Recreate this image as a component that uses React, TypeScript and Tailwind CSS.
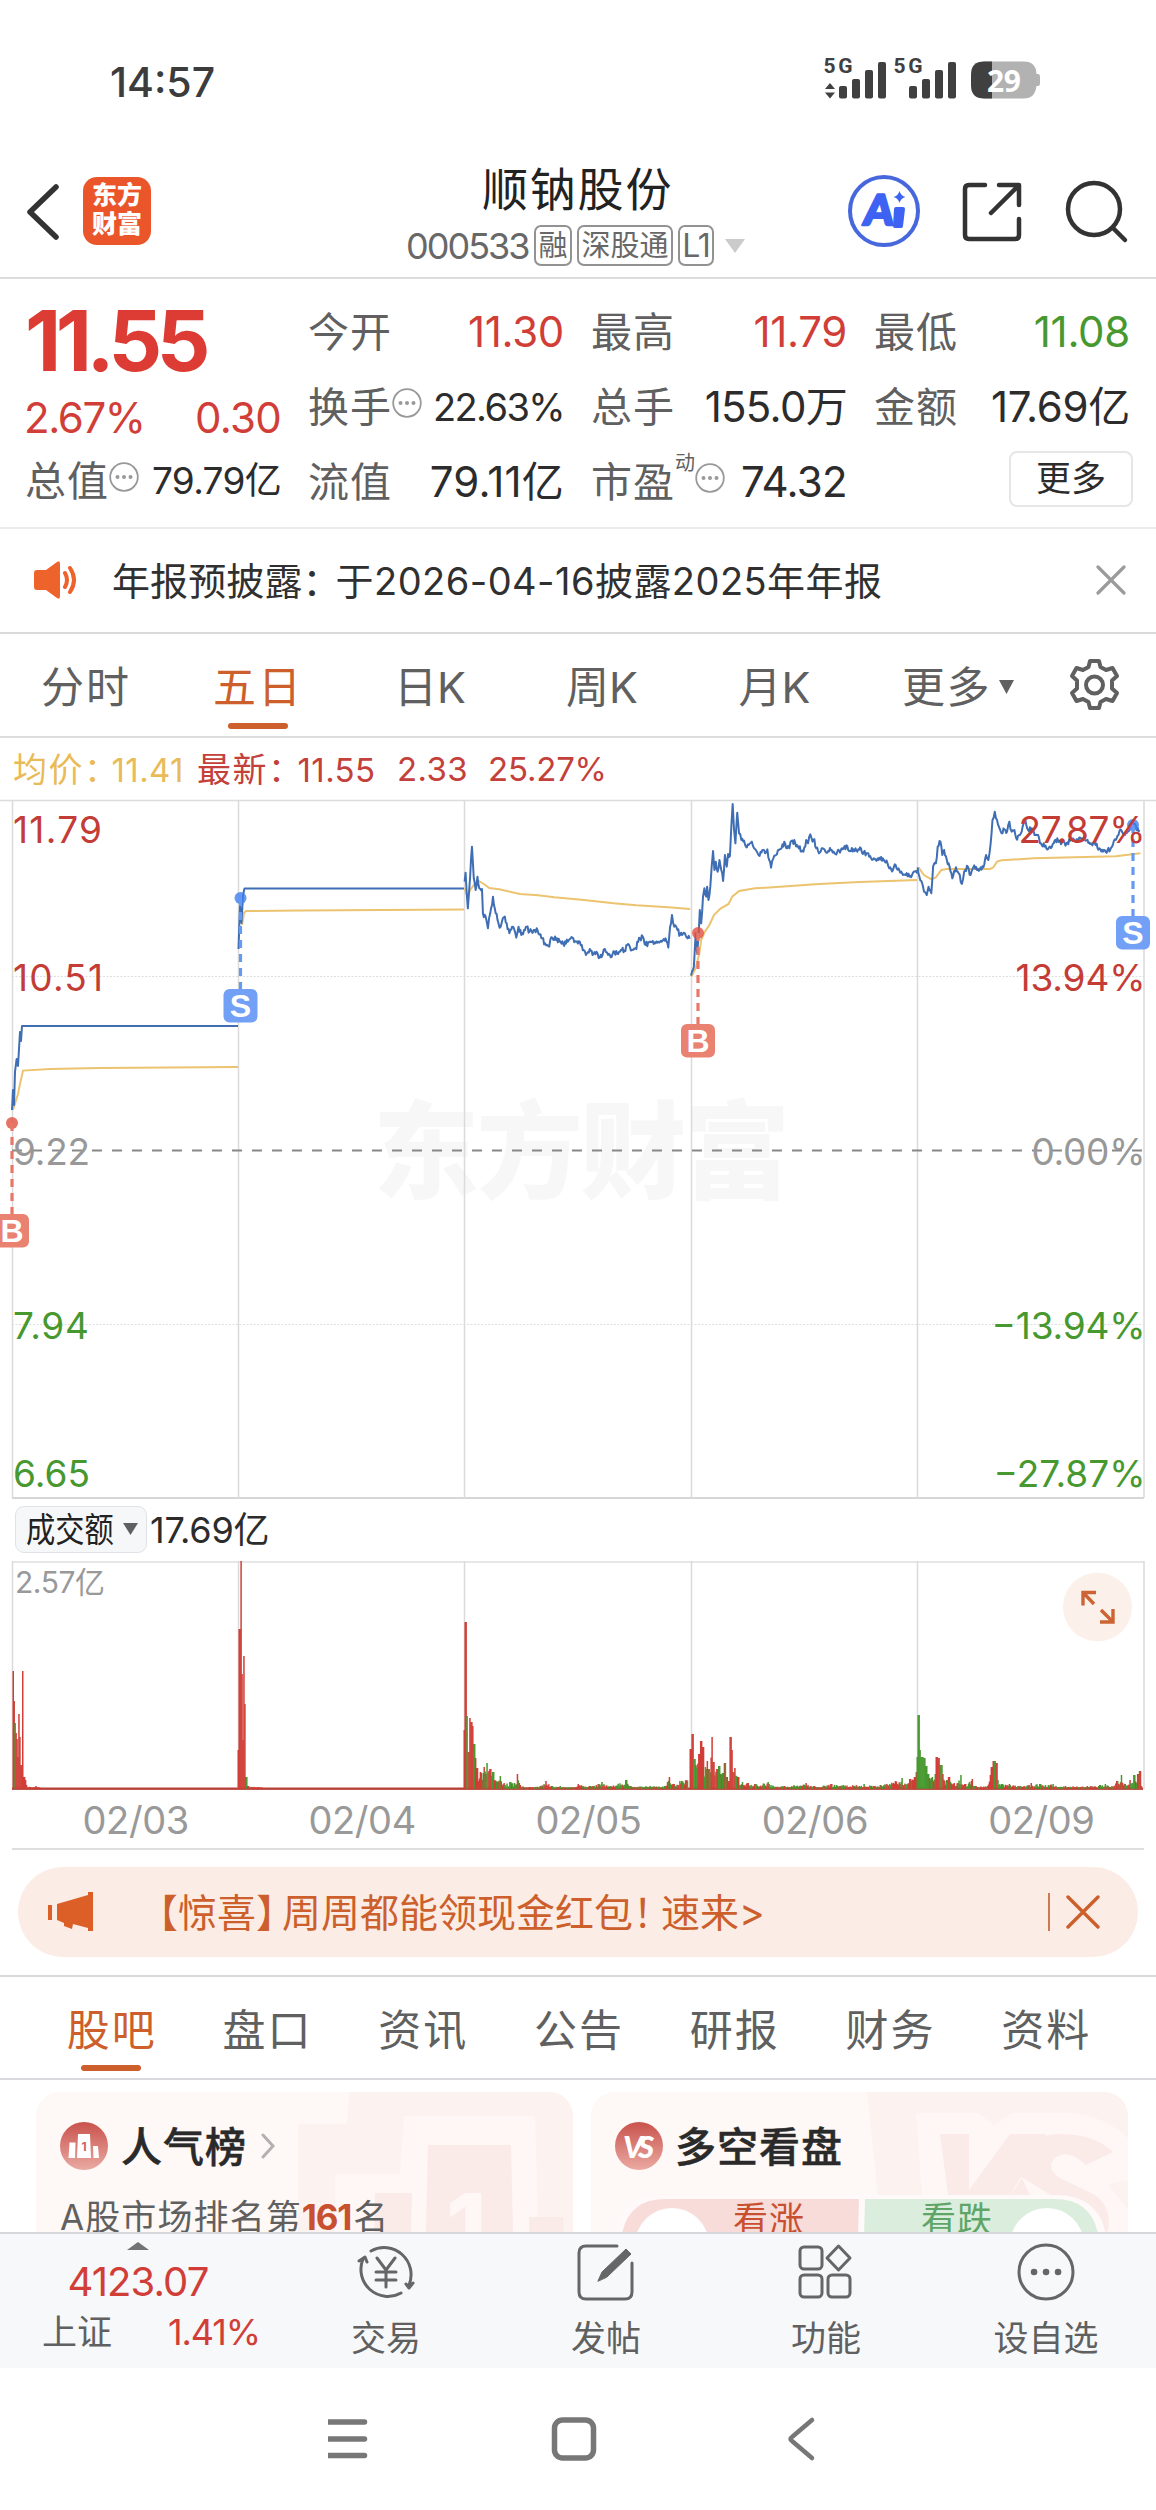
import React from 'react';

interface StatProps {
  label: string;
  value: string;
  color?: string;
  size?: string;
  info?: boolean;
  sup?: string;
}

interface MarkerProps {
  x: number;
  y: number;
  boxY: number;
  type: 'B' | 'S';
}

type Point = [number, number];

const RED = '#d03e37';
const GREEN = '#46982f';

// Small deterministic noise so every render draws the same minute ticks
const noise = (n: number) => {
  const v = Math.sin(n * 127.1 + 11.7) * 43758.5453;
  return v - Math.floor(v);
};

const parse = (s: string): Point[] =>
  s.split(' ').map((p) => p.split(',').map(Number) as Point);

// Intraday series, stored relative to the chart origin in sub-pixel units
const priceDays = [
  '54,305 56,278 61,385 66,290 70,200 74,295 78,330 82,290 86,325 92,327 94,400 100,410 105,445 110,400 116,350 122,400 128,430 133,440 140,412 146,430 152,460 158,440 163,450 167,473 172,440 178,465 184,450 190,440 196,455 205,450 214,452 222,475 230,490 237,498 246,473 254,480 262,485 270,493 280,485 290,473 298,485 306,485 315,510 322,520 328,507 336,522 345,520 350,533 356,525 361,507 368,525 374,532 382,515 390,522 396,510 404,512 412,492 420,510 428,505 438,475 444,470 450,495 458,487 468,492 478,485 486,485 494,475 500,503 504,440 508,405 513,440 520,450 526,465 534,458 540,472 547,476',
  '550,587 556,560 560,460 563,520 567,450 569,390 572,430 576,350 579,325 583,350 585,320 588,360 592,320 595,260 598,213 601,270 604,245 608,275 612,240 616,270 620,303 624,225 628,260 631,222 635,228 638,140 641,72 644,150 647,190 651,98 655,160 660,180 666,182 670,200 676,195 683,185 688,205 694,215 700,228 706,210 712,220 717,208 721,240 725,263 730,235 736,225 742,210 748,205 754,185 760,205 765,205 770,182 778,190 786,205 796,215 802,180 806,190 811,163 816,185 820,178 824,205 830,220 836,205 842,208 850,213 858,210 866,222 874,212 882,208 892,198 898,213 906,208 914,215 920,202 926,222 934,220 942,228 950,235 960,240 970,235 980,250 986,262 992,270 998,255 1004,265 1012,280 1020,285 1028,290 1036,278 1045,280',
  '1046,262 1050,290 1056,310 1060,335 1066,345 1070,320 1076,340 1080,260 1086,250 1090,200 1096,185 1100,225 1104,210 1110,240 1116,260 1122,295 1130,262 1136,280 1143,312 1148,275 1156,260 1162,285 1168,262 1176,270 1184,262 1190,262 1196,225 1201,240 1206,190 1210,120 1215,95 1220,120 1224,140 1230,160 1236,148 1242,155 1247,125 1252,155 1258,150 1262,175 1270,165 1276,140 1282,120 1288,150 1296,145 1302,165 1308,165 1316,190 1324,200 1334,202 1344,190 1352,175 1362,188 1372,190 1382,178 1394,178 1404,175 1414,182 1424,192 1436,195 1444,205 1452,215 1462,210 1472,200 1480,180 1486,165 1492,150 1500,165 1510,150 1518,125 1526,150 1532,150',
];

const averageDays = [
  '54,325 60,350 66,330 78,308 86,304 96,312 108,324 130,328 175,342 215,346 250,352 310,359 380,370 430,376 500,382 548,387',
  '550,590 560,565 568,520 572,480 580,455 590,435 600,405 615,385 632,372 640,350 655,333 690,325 760,319 830,312 920,306 1045,300',
  '1048,262 1060,285 1076,298 1086,292 1098,270 1110,267 1205,267 1212,262 1220,245 1230,241 1300,235 1480,229 1534,220',
];

const volumeDays = [
  '13,118 14,88 15,66 16,56 17,50 18,32 19,75 20,52 21,24 22.3,118 24,12 25,9 26,4 30,2 36,3 40,1',
  '238,39 239.4,160 240.4,228 241.4,115 242.4,49 243.8,133 245,85 246,12 248,3 258,2 262,1',
  '464,59 465.5,167 467,73 468.5,37 469.5,71 471,67 472.5,63 474,45 475,31 477,21 480,17 484,22 487,26 490,20 493,17 497,7 500,13 504,6 510,7 514,6 517,15 520,4 530,2 540,3 546,8 552,3 560,3 575,2 578,5 590,3 602,7 610,3 626,9 630,3 650,3 665,3 669,12 674,5 680,8 688,14',
  '690,40 692,55 694,30 696,24 699,35 701,48 703,42 706,20 707,28 709,20 712,52 713.6,27 716.6,20 719,23 722,16 724.7,26 727,12 729,8 730.6,52 732,39 733.5,17 735,21 738,12 742,7 747.5,6 755,5 768,7 771,4 784,3 806,6 814,3 831,5 843,4 864,5 880,4 895,8 902,11 906,5 910,10 914,12 916.4,17',
  '917,32 918.3,74 919.7,39 921.5,32 924,31 926,23 928,15 932,12 935,15 936,32 938.5,31 940.7,24 943,15 946.6,9 949,12 954,6 961,14 965,5 972,10 976,3 987,3 990,14 991.6,22 993,28 994.5,28 996,26 998,9 1002,5 1009,5 1020,3 1031,6 1040,5 1053,5 1065,3 1087,3 1100,4 1105,5 1112,3 1117,8 1121,14 1125,5 1130,9 1134,14 1137.5,15 1140,18 1141.5,3',
];

const gridX = [12.5, 238.5, 464.5, 691.5, 917.5, 1144];
const dates = ['02/03', '02/04', '02/05', '02/06', '02/09'];

const withTicks = (pts: Point[]) => {
  const out: string[] = [];
  for (let i = 0; i < pts.length - 1; i++) {
    const [x0, y0] = pts[i];
    const [x1, y1] = pts[i + 1];
    const steps = Math.max(1, Math.round((x1 - x0) / 2.2));
    for (let s = 0; s < steps; s++) {
      const t = s / steps;
      const jitter = s === 0 ? 0 : (noise(x0 + s) - 0.5) * 17;
      out.push(`${x0 + (x1 - x0) * t},${(y0 + (y1 - y0) * t + jitter).toFixed(1)}`);
    }
  }
  out.push(pts[pts.length - 1].join(','));
  return out.join(' ');
};

const heightAt = (pts: Point[], x: number) => {
  for (let i = 0; i < pts.length - 1; i++) {
    if (x >= pts[i][0] && x <= pts[i + 1][0]) {
      const near = x - pts[i][0] < pts[i + 1][0] - x ? pts[i] : pts[i + 1];
      const gap = pts[i + 1][0] - pts[i][0];
      if (gap < 3 || Math.abs(near[0] - x) < 0.6) return near[1];
      const t = (x - pts[i][0]) / gap;
      return (pts[i][1] + (pts[i + 1][1] - pts[i][1]) * t) * (0.35 + noise(x) * 0.55);
    }
  }
  return 0;
};

const buildBars = (pts: Point[], day: number) => {
  const bars: { x: number; h: number; color: string }[] = [];
  const end = pts[pts.length - 1][0];
  for (let x = pts[0][0]; x <= end; x += 0.95) {
    const h = Math.max(1.5, heightAt(pts, x));
    let green = noise(x * 3.3) > (day < 2 ? 0.82 : 0.5);
    if (h > 30) {
      const px = Math.floor(x);
      green = (day === 4 && x < 926) || (day === 2 && [466, 467, 473, 474].includes(px)) || (day === 0 && px === 14);
    }
    bars.push({ x, h, color: green ? GREEN : RED });
  }
  return bars;
};

const InfoDot = () => (
  <svg className="w-[30px] h-[30px] shrink-0" viewBox="0 0 30 30" fill="none">
    <circle cx="15" cy="15" r="13.8" stroke="#999" strokeWidth="1.8" />
    <g fill="#999">
      <circle cx="8.5" cy="15" r="2" />
      <circle cx="15" cy="15" r="2" />
      <circle cx="21.5" cy="15" r="2" />
    </g>
  </svg>
);

const Stat: React.FC<StatProps> = ({ label, value, color = 'text-[#2c2c2c]', size = 'text-[42px] tracking-[-0.3px]', info, sup }) => (
  <div className="flex items-center h-[56px] leading-[56px]">
    <span className="text-[41px] tracking-[1px] text-[#606060]">{label}</span>
    {sup && <span className="text-[20px] text-[#606060] self-start leading-[22px] -mt-[2px]">{sup}</span>}
    {info && <span className="-mt-[7px]"><InfoDot /></span>}
    <span className={`ml-auto whitespace-nowrap ${size} ${color}`}>{value}</span>
  </div>
);

const Marker: React.FC<MarkerProps> = ({ x, y, boxY, type }) => {
  const buy = type === 'B';
  return (
    <g>
      <circle cx={x} cy={y} r="6" fill={buy ? '#e0503f' : '#3f7ff0'} fillOpacity="0.8" />
      <line x1={x} x2={x} y1={y} y2={boxY} stroke={buy ? '#e87767' : '#6699f2'} strokeWidth="3.2" strokeDasharray="8 6" />
      <rect x={x - 17} y={boxY} width="34" height="33.5" rx="6" fill={buy ? '#ea8272' : '#72a0f6'} />
      <text x={x} y={boxY + 28} textAnchor="middle" fontSize="32" fontWeight="600" fill="#fff" fontFamily="Liberation Sans, sans-serif">
        {type}
      </text>
    </g>
  );
};

const StatusBar = () => (
  <div className="h-[156px] flex justify-between pt-[52px] pl-[110px] pr-[115px]">
    <span className="text-[41px] font-medium leading-[60px] text-[#3c3c3c]">14:57</span>
    <svg className="w-[220px] h-[50px] mt-[1px]" viewBox="822 54 220 50" fill="#404040">
      <g fontSize="21" fontWeight="700" fontFamily="Roboto, sans-serif">
        <text x="824.500" y="74" textLength="29">5G</text>
        <text x="894.500" y="74" textLength="29">5G</text>
      </g>
      <path d="M831 84l5 6h-10zM831 99.500l5-6h-10z" />
      {[840, 910].map((x) => (
        <g key={x}>
          <rect x={x} y="87" width="8" height="12.500" rx="2" />
          <rect x={x + 13} y="80" width="8" height="19.500" rx="2" />
          <rect x={x + 26} y="71" width="8" height="28.500" rx="2" />
          <rect x={x + 39} y="63" width="8" height="36.500" rx="2" />
        </g>
      ))}
      <path d="M984 62.500h41q12 0 12.500 12.500h1.500q2 0 2 3v6q0 3-2 3h-1.500q-1.500 12.500-12.500 12.500h-41z" fill="#b2b2b2" />
      <path d="M993 62.500h-8q-13 0-13 13v11q0 13 13 13h8z" />
      <text x="988" y="92.500" textLength="34" fontSize="30" fontWeight="700" fontFamily="Noto Sans, sans-serif" fill="#fff">29</text>
    </svg>
  </div>
);

const Header = () => (
  <div className="h-[123px] flex items-start border-b-2 border-[#dcdcdc] text-[#333]">
    <svg className="w-[34px] h-[60px] ml-[26px] mt-[26px]" viewBox="0 0 34 60" fill="none" stroke="#333" strokeWidth="5.500" strokeLinecap="round" strokeLinejoin="round">
      <path d="M30 5L4 30l26 25" />
    </svg>
    <div className="w-[68px] h-[68px] ml-[23px] mt-[21px] rounded-[14px] bg-[#ea552a] text-white font-black text-[25px] leading-[29px] pt-[4px] text-center">
      东方<br />财富
    </div>
    <div className="ml-[255px] w-[340px] flex flex-col">
      <div className="text-[46px] leading-[56px] mt-[5px] ml-[76px] tracking-[1.8px] text-[#222] whitespace-nowrap">顺钠股份</div>
      <div className="flex items-center h-[42px] mt-[8px] text-[#686868]">
        <span className="text-[36px] tracking-[-2px] w-[128px] shrink-0">000533</span>
        <span className="h-[41px] w-[38px] rounded-[7px] border-2 border-[#929292] text-[29px] leading-[37px] text-center shrink-0">融</span>
        <span className="h-[41px] w-[96px] rounded-[7px] border-2 border-[#929292] text-[29px] leading-[37px] text-center ml-[5px] whitespace-nowrap shrink-0">深股通</span>
        <span className="h-[41px] w-[36px] rounded-[7px] border-2 border-[#929292] text-[32px] leading-[37px] text-center ml-[5px] tracking-[-1px] shrink-0">L1</span>
        <svg className="w-[22px] h-[14px] ml-[10px] shrink-0" viewBox="0 0 22 14"><path d="M1 0h20L11 14z" fill="#cbcbcb" /></svg>
      </div>
    </div>
    <svg className="w-[74px] h-[74px] ml-[101px] mt-[18px]" viewBox="0 0 74 74">
      <circle cx="37" cy="37" r="34" fill="none" stroke="#4767dd" strokeWidth="4" />
      <text x="16" y="51" fontSize="42" fontWeight="900" fontFamily="Lato, sans-serif" fill="#3e63f2" stroke="#3e63f2" strokeWidth="2.500" strokeLinejoin="round" transform="translate(5 0) skewX(-6)">A</text>
      <path d="M49 33h7q2 0 2 2l-2 17q0 2-2 2h-6q-2 0-2-2l1-17q0-2 2-2zM52.500 17q1.500 5 6 6-4.500 1-6 6-1.500-5-6-6 4.500-1 6-6z" fill="#3e63f2" />
    </svg>
    <svg className="w-[60px] h-[60px] ml-[41px] mt-[26px]" viewBox="0 0 60 60" fill="none" stroke="#333" strokeWidth="4.500" strokeLinecap="round" strokeLinejoin="round">
      <path d="M23 3H7Q3 3 3 7v46q0 4 4 4h46q4 0 4-4V37M37 3h20v20M56 4L29 31" />
    </svg>
    <svg className="w-[64px] h-[64px] ml-[43px] mt-[24px]" viewBox="0 0 64 64" fill="none" stroke="#333" strokeWidth="4.500" strokeLinecap="round">
      <circle cx="29" cy="29" r="26" />
      <path d="M48 48l12 12" />
    </svg>
  </div>
);

const Quote = () => (
  <div className="h-[250px] border-b-2 border-[#ececec] flex pl-[25px] pt-[25px]">
    <div className="w-[256px]">
      <div className="h-[74px] text-[84px] leading-[74px] font-bold tracking-[-5.5px] text-[#dc3c34]">11.55</div>
      <div className="flex justify-between h-[56px] mt-[12px] items-center text-[42px] tracking-[-1.4px] text-[#d03e37] leading-[56px]">
        <span className="-ml-[1px]">2.67%</span>
        <span className="tracking-[-0.7px]">0.30</span>
      </div>
      <div className="mt-[7px]"><Stat label="总值" value="79.79亿" info size="text-[37px] tracking-[-0.7px]" /></div>
    </div>
    <div className="w-[256px] ml-[27px] flex flex-col gap-[19px]">
      <Stat label="今开" value="11.30" color="text-[#d03e37]" />
      <Stat label="换手" value="22.63%" info size="text-[38px] tracking-[-1.6px]" />
      <Stat label="流值" value="79.11亿" size="text-[42px] tracking-[0.2px]" />
    </div>
    <div className="w-[256px] ml-[27px] flex flex-col gap-[19px]">
      <Stat label="最高" value="11.79" color="text-[#d03e37]" />
      <Stat label="总手" value="155.0万" size="text-[42px] tracking-[-0.7px]" />
      <Stat label="市盈" value="74.32" sup="动" info size="text-[42px] tracking-[-0.7px]" />
    </div>
    <div className="w-[256px] ml-[27px] flex flex-col gap-[19px]">
      <Stat label="最低" value="11.08" color="text-[#46982f]" />
      <Stat label="金额" value="17.69亿" />
      <button className="self-end -mr-[3px] mt-[-3px] w-[124px] h-[56px] border-2 border-[#e6e6e6] rounded-[8px] text-[35px] leading-[51px] text-[#2c2c2c]">更多</button>
    </div>
  </div>
);

const Notice = () => (
  <div className="h-[105px] border-b-2 border-[#dadada] flex items-center pl-[34px]">
    <svg className="w-[44px] h-[38px]" viewBox="0 0 44 38" fill="#ee622b">
      <path d="M3 9h9L23 1q3-2 3 2v32q0 4-3 2L12 29H3q-3 0-3-3V12q0-3 3-3z" />
      <path d="M31 12q4 7 0 14M36 7q8 12 0 24" fill="none" stroke="#ee622b" strokeWidth="4" strokeLinecap="round" />
    </svg>
    <span className="ml-[34px] mt-[2px] text-[38px] text-[#303030] whitespace-nowrap w-[984px] tracking-[0.1px]">
      年报预披露：<span className="-ml-[5px] tracking-[0.45px]">于2026-04-16披露2025年年报</span>
    </span>
    <svg className="w-[30px] h-[30px]" viewBox="0 0 30 30" stroke="#9b9b9b" strokeWidth="3.200" strokeLinecap="round">
      <path d="M2 2l26 26M28 2L2 28" />
    </svg>
  </div>
);

const ChartTabs = () => (
  <div className="h-[104px] border-b-2 border-[#dcdcdc] flex text-[43px] leading-[60px] text-[#606060] pt-[23px]">
    <span className="w-[172px] text-center tracking-[2px]">分时</span>
    <div className="w-[172px] flex flex-col items-center text-[#cc5f2c]">
      <span className="tracking-[2px]">五日</span>
      <span className="w-[60px] h-[6px] rounded-full bg-[#cc5f2c] mt-[6px]" />
    </div>
    <span className="w-[172px] text-center">日K</span>
    <span className="w-[172px] text-center">周K</span>
    <span className="w-[172px] text-center pl-[1px]">月K</span>
    <div className="w-[208px] flex pl-[42px]">
      <span className="tracking-[1.5px]">更多</span>
      <svg className="w-[15px] h-[14px] ml-[8px] mt-[23px]" viewBox="0 0 15 14"><path d="M0 0h15L7.500 14z" fill="#606060" /></svg>
    </div>
    <svg className="w-[54px] h-[54px] mt-[1px]" viewBox="0 0 54 54" fill="none" stroke="#606060" strokeWidth="4" strokeLinejoin="round">
      <path d="M22 3h9l1.500 6 5.500 3 6.500-2 4.500 8-5 4.500v8l5 4.500-4.500 8-6.500-2-5.500 3-1.500 6h-9l-1.500-6-5.500-3-6.500 2L4 35l5-4.500v-8L4 18l4.500-8 6.500 2 5.500-3z" />
      <circle cx="26.500" cy="27" r="8.500" />
    </svg>
  </div>
);

const Legend = () => (
  <div className="h-[62px] flex items-center pl-[13px] pt-[2px] text-[33px] tracking-[0.4px] text-[#c4403a] whitespace-nowrap">
    <span className="w-[184px] text-[#e9bb58]"><span className="text-[34px] tracking-[1.5px]">均价：</span><span className="-ml-[8px]">11.41</span></span>
    <span className="w-[200px]"><span className="text-[34px] tracking-[1.5px]">最新：</span><span className="-ml-[6px]">11.55</span></span>
    <span className="w-[91px]">2.33</span>
    <span className="tracking-[-0.2px]">25.27%</span>
  </div>
);

const PriceChart = () => {
  const left: [string, number, string, number][] = [
    ['11.79', 842.5, '#c43c36', 89],
    ['10.51', 990.5, '#c43c36', 90],
    ['9.22', 1164.5, '#989898', 77],
    ['7.94', 1339, '#46982f', 76],
    ['6.65', 1487, '#46982f', 77],
  ];
  const right: [string, number, string, number][] = [
    ['27.87%', 842.5, '#c43c36', 127],
    ['13.94%', 990.5, '#c43c36', 130],
    ['0.00%', 1164.5, '#989898', 114],
    ['−13.94%', 1339, '#46982f', 154],
    ['−27.87%', 1487, '#46982f', 152],
  ];
  return (
    <svg className="w-[1156px] h-[700px] block shrink-0" viewBox="0 799 1156 700" fill="none">
      <text x="373" y="1190" textLength="417" fontSize="106" fontWeight="900" fill="#f7f7f7" fontFamily="Noto Sans CJK SC, sans-serif">东方财富</text>
      <path d="M0 800.500H1156" stroke="#dcdcdc" strokeWidth="1.500" />
      <path d="M12 1498H1144" stroke="#d6d6d6" strokeWidth="2" />
      {gridX.map((x) => (
        <line key={x} x1={x} x2={x} y1="801" y2="1498" stroke="#dadada" strokeWidth="1.500" />
      ))}
      <path d="M12 976.500H1144M12 1324.500H1144" stroke="#dedede" strokeWidth="1" strokeDasharray="2 1.500" />
      <path d="M12 1150.500H1144" stroke="#888" strokeWidth="1.800" strokeDasharray="10 10" />
      <g stroke="#ecc36f" strokeWidth="2">
        <path d="M13 1110l5-16 2-10 3-13.400 27-1.600 50-1 138-1M242 925l2-12 2-2 54-.500 164-1" />
        {averageDays.map((d) => (
          <polyline key={d} points={d} transform="translate(440 780) scale(.4566 .3333)" vectorEffect="non-scaling-stroke" />
        ))}
      </g>
      <g stroke="#3f6eb5" strokeWidth="2" strokeLinejoin="round">
        <path d="M12 1110l1-20 1 15 1-33 1.600-13 1.400 7 2-34 1 9 1-15H238M238.500 949l1.500-44 1.500 18 1.500-28 1.500-6.500H464" />
        {priceDays.map((d) => (
          <polyline key={d} points={withTicks(parse(d))} transform="translate(440 780) scale(.4566 .3333)" vectorEffect="non-scaling-stroke" />
        ))}
      </g>
      <Marker x={12} y={1123} boxY={1214} type="B" />
      <Marker x={240.500} y={898} boxY={989} type="S" />
      <Marker x={698} y={933} boxY={1024} type="B" />
      <Marker x={1133} y={825} boxY={916} type="S" />
      <g fontSize="37" fontFamily="Inter, sans-serif">
        {left.map(([label, y, color, w]) => (
          <text key={label} x="13" y={y} fill={color} textLength={w}>{label}</text>
        ))}
        {right.map(([label, y, color, w]) => (
          <text key={label} x={1145.500 - w} y={y} fill={color} textLength={w}>{label}</text>
        ))}
      </g>
    </svg>
  );
};

const VolumeChart = () => (
  <div>
    <div className="h-[62px] flex items-center pl-[15px] pb-[2px]">
      <div className="w-[132px] h-[47px] rounded-[9px] border border-[#dfe2e6] bg-[#f6f7f9] flex items-center pl-[10px]">
        <span className="w-[88px] text-[34px] leading-[44px] pt-[2px] text-[#222] whitespace-nowrap origin-left scale-x-[0.86]">成交额</span>
        <svg className="w-[15px] h-[12px] ml-[9px]" viewBox="0 0 15 12"><path d="M0 0h15L7.500 12z" fill="#606060" /></svg>
      </div>
      <span className="ml-[3px] mt-[2px] text-[36px] tracking-[-0.2px] text-[#2c2c2c]">17.69亿</span>
    </div>
    <svg className="w-[1156px] h-[229px] block" viewBox="0 1561 1156 229" fill="none">
      <path d="M12 1562H1144" stroke="#dedede" strokeWidth="1.500" />
      {gridX.map((x) => (
        <line key={x} x1={x} x2={x} y1="1561" y2="1789" stroke="#dadada" strokeWidth="1.500" />
      ))}
      <text x="15" y="1592.500" fontSize="30" textLength="90" fill="#999" fontFamily="Inter, Noto Sans CJK SC, sans-serif">2.57亿</text>
      <path d="M12 1788.500H1143" stroke="#b8423a" strokeWidth="2" />
      {volumeDays.map((d, i) =>
        buildBars(parse(d), i).map((b) => (
          <rect key={b.x} x={b.x - 0.500} y={1789 - b.h} width="1.500" height={b.h} fill={b.color} />
        ))
      )}
      <path d="M12 1789.300H1143" stroke="#b8423a" strokeWidth="1" />
      <circle cx="1097.500" cy="1607" r="34.500" fill="#fbf1ea" />
      <path d="M1083 1605.500v-13h13M1083 1592.500l11 11.500M1113 1609v13h-13M1113 1622l-12-12" stroke="#cc6434" strokeWidth="3.400" />
    </svg>
    <div className="h-[60px] mx-[12px] border-b-2 border-[#dedede] flex text-[38px] leading-[60px] text-[#999]">
      {dates.map((d) => (
        <span key={d} className="flex-1 text-center pl-[21px] tracking-[-0.4px]">{d}</span>
      ))}
    </div>
  </div>
);

const PromoBanner = () => (
  <div className="h-[127px] pt-[17px] border-b-2 border-[#d9dadd]">
    <div className="mx-[18px] h-[90px] rounded-full bg-[#fbede5] flex items-center pl-[30px] text-[#cc5f2c]">
      <svg className="w-[46px] h-[40px]" viewBox="0 0 46 40" fill="#dd5f28">
        <path d="M0 13h4v15H0zM9 12L40 3V0h5v39h-5v-3l-15-4-1 5-8-3v-3l-7-3z" />
      </svg>
      <span className="ml-[45px] w-[808px] mt-[2px] text-[39px] whitespace-nowrap">
        【惊喜<span className="-mr-[13px]">】</span>周周都能领现金红包<span className="-mr-[11px]">！</span>速来&gt;
      </span>
      <span className="h-[38px] w-[1.5px] bg-[#cc7a52] ml-[101px]" />
      <svg className="w-[34px] h-[34px] ml-[16px]" viewBox="0 0 34 34" stroke="#cc5f2c" strokeWidth="3.400" strokeLinecap="round">
        <path d="M2 2l30 30M32 2L2 32" />
      </svg>
    </div>
  </div>
);

const NewsTabs = () => {
  const tabs = ['股吧', '盘口', '资讯', '公告', '研报', '财务', '资料'];
  return (
    <div className="h-[103px] border-b-2 border-[#d9dadd] flex pl-[34px] pr-[32px] pt-[23px] text-[43px] leading-[60px] tracking-[2px] text-[#606060]">
      {tabs.map((t, i) => (
        <div key={t} className={`flex-1 flex flex-col items-center ${i === 0 ? 'text-[#cc5f2c]' : ''}`}>
          <span>{t}</span>
          {i === 0 && <span className="w-[60px] h-[6px] rounded-full bg-[#cc5f2c] mt-[5px] mr-[2px]" />}
        </div>
      ))}
    </div>
  );
};

const Cards = () => (
  <div className="h-[152px] pt-[12px] pl-[36px] flex gap-[18px] overflow-hidden items-start">
    <div className="relative w-[537px] h-[220px] rounded-[24px] bg-[#fef8f6] overflow-hidden shrink-0">
      <svg className="absolute inset-0 w-[537px] h-[220px]" viewBox="36 2092 537 220">
        <path d="M349 2092H573V2312H298V2124H347z" fill="#fcf2f0" />
        <path d="M404 2116H535L541 2312H335V2174H400z" fill="#fef7f5" />
        <path d="M428 2145H511L515 2312H424zM375 2193H412L409 2312H373zM529 2217H563L566 2312H531z" fill="#faebe9" />
        <text x="446" y="2260" fontSize="92" fontWeight="800" fill="#fef7f5" fontFamily="Inter, sans-serif">1</text>
      </svg>
      <div className="relative pl-[24px] pt-[24px] flex items-center h-[84px]">
        <svg className="w-[48px] h-[48px]" viewBox="0 0 48 48">
          <defs>
            <linearGradient id="badge" x1="0" y1="0" x2="0" y2="1">
              <stop offset="0" stopColor="#c9524d" />
              <stop offset="1" stopColor="#eaaaa2" />
            </linearGradient>
          </defs>
          <circle cx="24" cy="24" r="24" fill="url(#badge)" />
          <path d="M18 12h12l1 24H17zM9.500 20.500h6L15 36H8.500zM33 24h5l1 12h-5.500z" fill="#fff" />
          <text x="21.500" y="29" fontSize="12" fontWeight="700" fill="#cf625c" fontFamily="Inter, sans-serif">1</text>
        </svg>
        <span className="ml-[13px] pt-[1px] text-[41px] tracking-[1px] leading-[60px] font-medium text-[#2a2a2a] [-webkit-text-stroke:0.5px]">人气榜</span>
        <svg className="w-[14px] h-[26px] ml-[14px]" viewBox="0 0 14 26" fill="none" stroke="#b3b0af" strokeWidth="3" strokeLinecap="round"><path d="M2 2l10 11L2 24" /></svg>
      </div>
      <div className="relative pl-[24px] mt-[15px] text-[35px] leading-[52px] tracking-[1.1px] text-[#606060]">
        A股市场排名第<span className="font-bold text-[#c8502f] tracking-[-1.2px] mr-[2px]">161</span>名
      </div>
    </div>
    <div className="relative w-[537px] h-[220px] rounded-[24px] bg-[#fef8f6] overflow-hidden shrink-0">
      <svg className="absolute inset-0 w-[537px] h-[220px]" viewBox="591 2092 537 220">
        <path d="M867 2092H1128V2312H890z" fill="#fcf2f0" />
        <path d="M916 2113H978L994 2125 1012 2113H1070Q1105 2116 1128 2138V2180L1108 2184 1128 2210V2312H930z" fill="#fef7f5" />
        <path d="M940 2134H969V2190L1010 2134H1046L984 2240H954zM1113 2152L1086 2165Q1068 2148 1055 2158 1045 2168 1060 2178L1095 2195Q1116 2210 1105 2240H980L1022 2178 1032 2200Q1050 2212 1068 2206L1020 2176Q1014 2135 1060 2134 1095 2134 1113 2152z" fill="#faebe9" />
        <path d="M613 2312V2250Q613 2195 665 2195H1055Q1107 2195 1107 2250V2312z" fill="#fffaf9" />
        <path d="M620 2312V2254Q620 2199 665 2199H859L856 2312z" fill="#f8dcda" />
        <path d="M865 2199H1055Q1100 2199 1100 2254V2312H862z" fill="#dbeedd" />
        <circle cx="672" cy="2245" r="37" fill="#fff" />
        <circle cx="1047" cy="2245" r="37" fill="#fff" />
      </svg>
      <div className="relative pl-[24px] pt-[24px] flex items-center h-[84px]">
        <svg className="w-[48px] h-[48px]" viewBox="0 0 48 48">
          <circle cx="24" cy="24" r="24" fill="url(#badge)" />
          <text x="8" y="36" fontSize="31" fontWeight="900" fontStyle="italic" textLength="31" fill="#fff" fontFamily="Lato, sans-serif">VS</text>
        </svg>
        <span className="ml-[12px] pt-[1px] text-[41px] tracking-[1px] leading-[60px] font-medium text-[#2a2a2a] [-webkit-text-stroke:0.5px]">多空看盘</span>
      </div>
      <div className="relative mt-[17px] flex pl-[142px] gap-[116px] text-[35px] leading-[52px] tracking-[1px] text-[#c8502f]">
        <span>看涨</span>
        <span className="text-[#5fa568]">看跌</span>
      </div>
    </div>
  </div>
);

const BottomBar = () => {
  const actions = [
    {
      label: '交易',
      icon: (
        <>
          <path d="M15 9A27 27 0 0 1 53 43M45 51A27 27 0 0 1 7 17M3 19l6-4 2 5M57 41l-4 5-3-4" />
          <path d="M21 16l9 12 9-12M30 28v17M20 30h20M20 38h20" />
        </>
      ),
    },
    {
      label: '发帖',
      icon: (
        <>
          <path d="M41 4H10Q3 4 3 11v39q0 7 7 7h39q7 0 7-7V21" />
          <path d="M22 39l4-9L50 7l5 5-24 23z" fill="#666" strokeWidth="1" />
        </>
      ),
    },
    {
      label: '功能',
      icon: (
        <>
          <rect x="4" y="5" width="22" height="22" rx="4" />
          <rect x="4" y="33" width="22" height="22" rx="4" />
          <rect x="32" y="33" width="22" height="22" rx="4" />
          <path d="M42.500 4L54 16 42.500 28 31 16z" />
        </>
      ),
    },
    {
      label: '设自选',
      icon: (
        <>
          <circle cx="30" cy="30" r="27" />
          <path d="M18 30h.1M30 30h.1M42 30h.1" strokeWidth="6.500" />
        </>
      ),
    },
  ];
  return (
    <div className="h-[136px] bg-[#f7f8fa] border-t-2 border-[#d6d8dc] flex">
      <div className="w-[276px] pt-[8px]">
        <svg className="w-[22px] h-[8px] ml-[127px] block" viewBox="0 0 22 8"><path d="M11 0l11 8H0z" fill="#737373" /></svg>
        <div className="text-[40px] leading-[46px] mt-[9px] text-center tracking-[-0.9px] text-[#d03e37]">4123.07</div>
        <div className="flex items-center justify-between pl-[42px] pr-[16px] mt-[4px] leading-[46px]">
          <span className="text-[35px] text-[#606060]">上证</span>
          <span className="text-[36px] tracking-[-1.1px] text-[#d03e37]">1.41%</span>
        </div>
      </div>
      {actions.map(({ label, icon }) => (
        <div key={label} className="w-[220px] flex flex-col items-center pt-[8px]">
          <svg className="w-[60px] h-[60px]" viewBox="0 0 60 60" fill="none" stroke="#666" strokeWidth="3" strokeLinecap="round" strokeLinejoin="round">{icon}</svg>
          <span className="text-[35px] leading-[50px] mt-[11px] text-[#606060]">{label}</span>
        </div>
      ))}
    </div>
  );
};

const SystemNav = () => (
  <div className="h-[142px] flex justify-center">
    <svg className="w-[500px] h-[60px] mt-[41px]" viewBox="328 2409 500 60" fill="none" stroke="#777" strokeWidth="5.500" strokeLinecap="round" strokeLinejoin="round">
      <path d="M328.500 2422h36M328.500 2439h36M328.500 2455.500h36" />
      <rect x="554.500" y="2420" width="39" height="38" rx="8" />
      <path d="M812 2420l-20 17q-3 2 0 4l20 17" strokeWidth="4.500" />
    </svg>
  </div>
);

const App: React.FC = () => {
  return (
    <div className="w-[1156px] h-[2510px] bg-white overflow-hidden flex flex-col font-[Inter,'Noto_Sans_CJK_SC',sans-serif]">
      <StatusBar />
      <Header />
      <Quote />
      <Notice />
      <ChartTabs />
      <Legend />
      <PriceChart />
      <VolumeChart />
      <PromoBanner />
      <NewsTabs />
      <Cards />
      <BottomBar />
      <SystemNav />
    </div>
  );
};

export default App;
